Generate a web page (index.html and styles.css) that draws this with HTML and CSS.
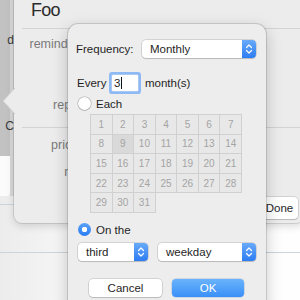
FILE: index.html
```html
<!DOCTYPE html>
<html lang="en">
<head>
    <meta charset="UTF-8">
    <title>Reminder repeat</title>
    <link rel="stylesheet" href="styles.css">
</head>
<body>

    <!-- window behind everything -->
    <div class="window">
        <div class="window-top">
            <div class="sidebar">
                <div class="sb-item sb-first">d</div>
                <div class="sb-item sb-second">C</div>
                <div class="sb-box"></div>
            </div>
        </div>
        <div class="table">
            <div class="table-row"></div>
            <div class="table-row"></div>
        </div>
    </div>

    <!-- reminder detail popover -->
    <div class="sheet">
        <svg class="sheet-arrow" width="13" height="26" viewBox="0 0 13 26">
            <path d="M13 0 L1 13 L13 26 Z" fill="#ececec"/>
            <path d="M13 0 L1 13 L13 26" fill="none" stroke="#cfcfcf" stroke-width="1"/>
        </svg>
        <div class="sheet-title">Foo</div>
        <div class="sheet-rule"></div>
        <div class="sheet-row row-remind"><span class="sheet-label">remind me:</span></div>
        <div class="sheet-row row-repeat"><span class="sheet-label">repeat:</span></div>
        <div class="sheet-rule"></div>
        <div class="sheet-row row-priority"><span class="sheet-label">priority:</span></div>
        <div class="sheet-row row-note"><span class="sheet-label">note:</span></div>
        <div class="sheet-foot">
            <button class="btn done">Done</button>
        </div>
    </div>

    <!-- frequency popover -->
    <div class="popover">
        <div class="row">
            <span class="freq-label">Frequency:</span>
            <div class="select freq-select">
                <span class="select-text">Monthly</span>
                <span class="stepper">
                    <svg width="8" height="12" viewBox="0 0 8 12"><path d="M1.5 4.5 L4 2 L6.5 4.5 M1.5 7.5 L4 10 L6.5 7.5" fill="none" stroke="#fff" stroke-width="1.2" stroke-linecap="round" stroke-linejoin="round"/></svg>
                </span>
            </div>
        </div>

        <div class="row every-row">
            <span class="every-label">Every</span>
            <div class="field">3<span class="caret"></span></div>
            <span class="unit">month(s)</span>
        </div>

        <label class="radio-row each-row">
            <span class="radio"></span>
            <span>Each</span>
        </label>

        <div class="days">
            <span class="day">1</span><span class="day">2</span><span class="day">3</span><span class="day">4</span><span class="day">5</span><span class="day">6</span><span class="day">7</span>
            <span class="day">8</span><span class="day picked">9</span><span class="day">10</span><span class="day">11</span><span class="day">12</span><span class="day">13</span><span class="day">14</span>
            <span class="day">15</span><span class="day">16</span><span class="day">17</span><span class="day">18</span><span class="day">19</span><span class="day">20</span><span class="day">21</span>
            <span class="day">22</span><span class="day">23</span><span class="day">24</span><span class="day">25</span><span class="day">26</span><span class="day">27</span><span class="day">28</span>
            <span class="day">29</span><span class="day">30</span><span class="day">31</span>
        </div>

        <label class="radio-row on-row">
            <span class="radio checked"></span>
            <span>On the</span>
        </label>

        <div class="row selects">
            <div class="select ordinal-select">
                <span class="select-text">third</span>
                <span class="stepper">
                    <svg width="8" height="12" viewBox="0 0 8 12"><path d="M1.5 4.5 L4 2 L6.5 4.5 M1.5 7.5 L4 10 L6.5 7.5" fill="none" stroke="#fff" stroke-width="1.2" stroke-linecap="round" stroke-linejoin="round"/></svg>
                </span>
            </div>
            <div class="select day-select">
                <span class="select-text">weekday</span>
                <span class="stepper">
                    <svg width="8" height="12" viewBox="0 0 8 12"><path d="M1.5 4.5 L4 2 L6.5 4.5 M1.5 7.5 L4 10 L6.5 7.5" fill="none" stroke="#fff" stroke-width="1.2" stroke-linecap="round" stroke-linejoin="round"/></svg>
                </span>
            </div>
        </div>

        <div class="row actions">
            <button class="btn cancel">Cancel</button>
            <button class="btn ok">OK</button>
        </div>
    </div>

</body>
</html>
```
FILE: styles.css
```css
* {
    box-sizing: border-box;
}
html, body {
    margin: 0;
    padding: 0;
}
body {
    width: 300px;
    height: 300px;
    overflow: hidden;
    position: relative;
    font-family: 'Liberation Sans', Arial, sans-serif;
    background: #f4f4f4;
}

/* window behind */
.window {
    display: flex;
    flex-direction: column;
    height: 300px;
}
.window-top {
    height: 226px;
    display: flex;
    background: #e6e6e6;
}
.sidebar {
    width: 14px;
    background: linear-gradient(90deg, #c2c2c2 10px, #d8d8d8 10px);
    overflow: hidden;
    display: flex;
    flex-direction: column;
    align-items: flex-end;
    font-size: 12px;
    color: #3a3a3a;
}
.sb-item {
    white-space: nowrap;
    line-height: 14px;
    padding-right: 0;
}
.sb-first {
    margin-top: 33px;
}
.sb-second {
    margin-top: 72px;
}
.sb-box {
    margin-top: auto;
    width: 14px;
    height: 40px;
    background: #fbfbfb;
    border-radius: 0 0 5px 0;
    border-right: 4px solid #d8d8d8;
}
.table {
    flex: 1;
    padding-top: 8px;
    background: linear-gradient(90deg, #ececec, #fbfbfb 35%, #fefefe);
}
.table-row {
    height: 48px;
    border-top: 1px solid #cbd4dc;
}

/* reminder popover */
.sheet {
    position: absolute;
    left: 14px;
    top: -10px;
    width: 290px;
    height: 233px;
    background: #ececec;
    border-radius: 8px;
    box-shadow: 0 0 0 1px rgba(0, 0, 0, 0.1), 0 3px 8px rgba(0, 0, 0, 0.15);
    display: flex;
    flex-direction: column;
}
.sheet-arrow {
    position: absolute;
    left: -12px;
    top: 98px;
}
.sheet-title {
    padding: 9px 0 0 17px;
    height: 38px;
    font-size: 18px;
    line-height: 22px;
    letter-spacing: -0.8px;
    color: #2b2b2b;
}
.sheet-rule {
    margin-left: 8px;
    border-top: 1px solid #d3d3d3;
}
.sheet-row {
    display: flex;
    font-size: 12.5px;
    line-height: 14px;
    color: #7a7a7a;
}
.sheet-label {
    width: 78px;
    text-align: right;
}
.row-remind {
    margin-top: 8px;
}
.row-repeat {
    margin-top: 47px;
    height: 29px;
}
.row-priority {
    margin-top: 10px;
}
.row-note {
    margin-top: 13px;
}
.sheet-foot {
    margin-top: auto;
    padding: 0 6px 4px 0;
    display: flex;
    justify-content: flex-end;
}
.btn.done {
    width: 37px;
    height: 22px;
    font-size: 11.5px;
}

/* frequency popover */
.popover {
    position: absolute;
    left: 68px;
    top: 24px;
    width: 198px;
    height: 290px;
    padding: 16px 8px 0;
    background: #ededed;
    border-radius: 10px;
    box-shadow: 0 0 0 1px rgba(0, 0, 0, 0.13), 0 5px 16px rgba(0, 0, 0, 0.22);
    display: flex;
    flex-direction: column;
    font-size: 11.5px;
    color: #1f1f1f;
}
.row {
    display: flex;
    align-items: center;
}
.freq-label {
    width: 66px;
}
.select {
    display: flex;
    align-items: center;
    height: 18px;
    padding-left: 8px;
    background: #fff;
    border-radius: 4px;
    box-shadow: 0 0 0 0.5px rgba(0, 0, 0, 0.22), 0 1px 1px rgba(0, 0, 0, 0.12);
}
.select-text {
    flex: 1;
}
.stepper {
    width: 14px;
    height: 18px;
    border-radius: 0 4px 4px 0;
    background: linear-gradient(#69aaf9, #2c7cf3);
    display: flex;
    align-items: center;
    justify-content: center;
}
.freq-select {
    width: 114px;
}
.every-row {
    margin-top: 17px;
    height: 16px;
}
.every-label {
    width: 36px;
    padding-left: 1px;
}
.field {
    width: 26px;
    height: 16px;
    padding-left: 2px;
    background: #fff;
    line-height: 16px;
    box-shadow: 0 0 0 1px #a9c7f0, 0 0 0 3px #8db9f4;
    border-radius: 1px;
    display: flex;
    align-items: center;
}
.caret {
    width: 1px;
    height: 12px;
    margin-left: 1px;
    background: #111;
}
.unit {
    margin-left: 7px;
}
.radio-row {
    display: flex;
    align-items: center;
    gap: 5px;
    padding-left: 2px;
    height: 13px;
}
.each-row {
    margin-top: 6px;
}
.radio {
    width: 13px;
    height: 13px;
    border-radius: 50%;
    background: #fff;
    box-shadow: 0 0 0 0.5px rgba(0, 0, 0, 0.3), 0 1px 1px rgba(0, 0, 0, 0.1);
}
.radio.checked {
    background: radial-gradient(circle, #fff 0 2.5px, transparent 3px), linear-gradient(#5aa2f8, #2a7cf3);
    box-shadow: none;
}
.days {
    margin: 4px 0 0 14px;
    width: 152px;
    height: 99px;
    display: grid;
    grid-template-columns: repeat(7, 1fr);
    grid-template-rows: repeat(5, 1fr);
    border-top: 1px solid #d0d0d0;
    border-left: 1px solid #d0d0d0;
}
.day {
    display: flex;
    align-items: center;
    justify-content: center;
    background: #e8e8e8;
    border-right: 1px solid #d0d0d0;
    border-bottom: 1px solid #d0d0d0;
    font-size: 10px;
    color: #a4a4a4;
}
.day.picked {
    background: #d9d9d9;
}
.on-row {
    margin-top: 10px;
}
.selects {
    margin-top: 7px;
    padding-left: 2px;
    gap: 10px;
}
.ordinal-select {
    width: 70px;
}
.day-select {
    width: 98px;
}
.actions {
    margin-top: 18px;
    padding-left: 13px;
    gap: 10px;
}
.btn {
    height: 18px;
    border: none;
    border-radius: 4px;
    font-family: inherit;
    font-size: 11.5px;
    background: #fff;
    color: #1f1f1f;
    box-shadow: 0 0 0 0.5px rgba(0, 0, 0, 0.22), 0 1px 1px rgba(0, 0, 0, 0.12);
    padding: 0;
}
.cancel {
    width: 73px;
}
.ok {
    width: 72px;
    color: #fff;
    background: linear-gradient(#6ab3fb, #3a90f8);
    box-shadow: 0 0 0 0.5px rgba(0, 60, 160, 0.25);
}
```
